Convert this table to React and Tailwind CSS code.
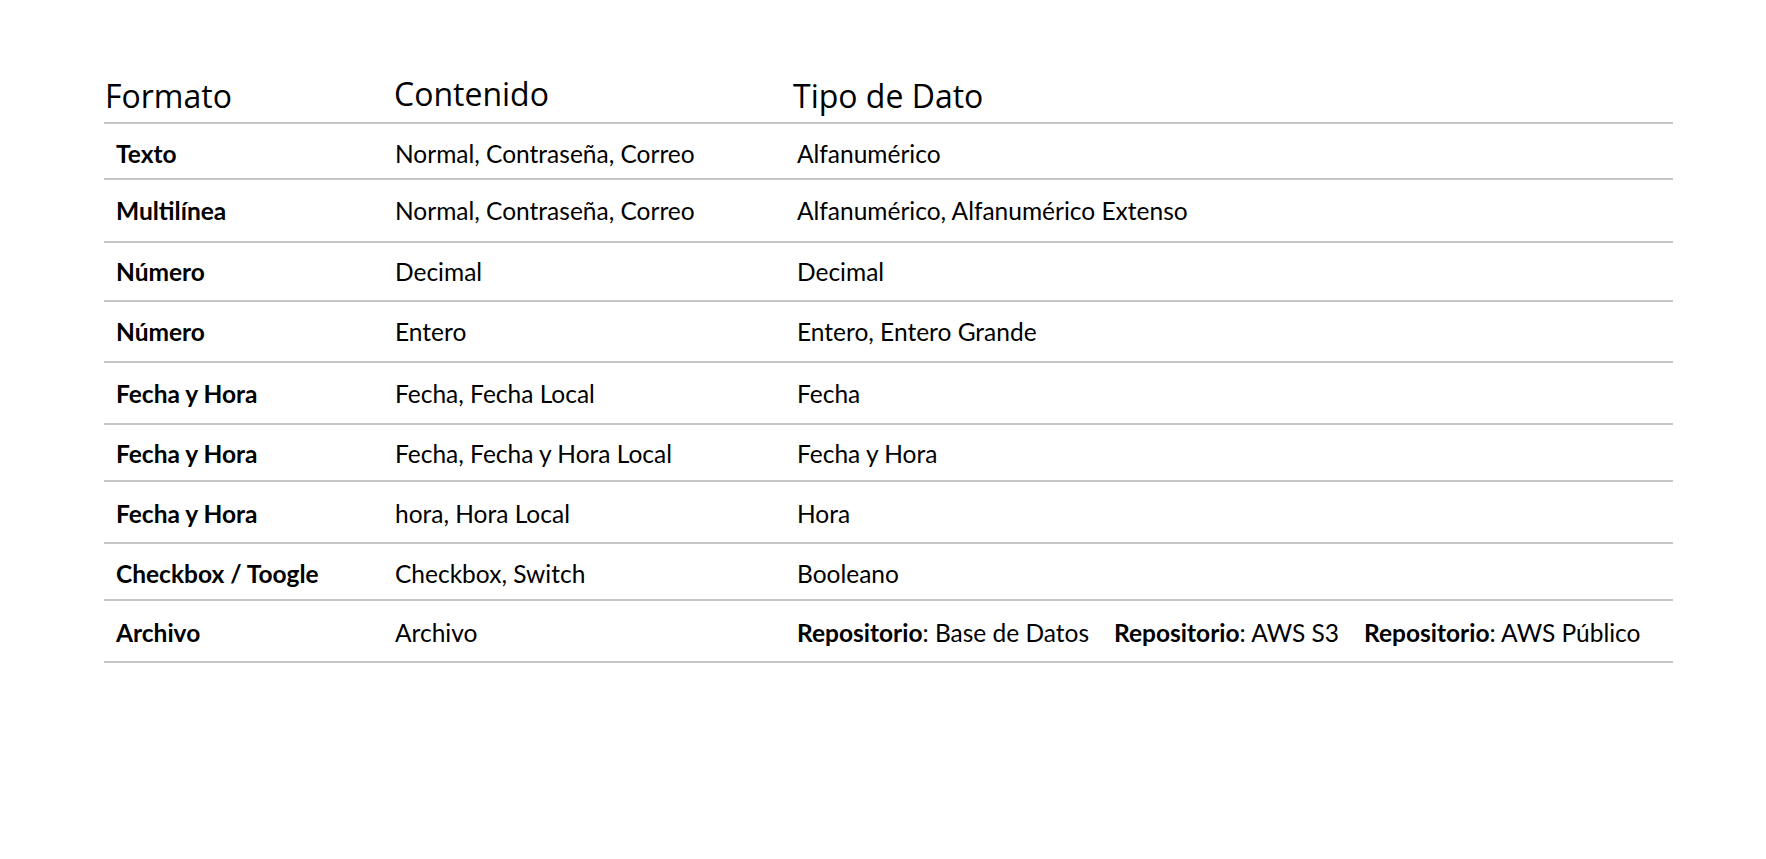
import React from "react";

const rows = [
  { h: "h-[56px] pt-[5px]", a: "Texto", b: "Normal, Contraseña, Correo", c: "Alfanumérico" },
  { h: "h-[63px] pt-[1px]", a: "Multilínea", b: "Normal, Contraseña, Correo", c: "Alfanumérico, Alfanumérico Extenso" },
  { h: "h-[59px]", a: "Número", b: "Decimal", c: "Decimal" },
  { h: "h-[61px] pt-[1px]", a: "Número", b: "Entero", c: "Entero, Entero Grande" },
  { h: "h-[62px] pt-[1px]", a: "Fecha y Hora", b: "Fecha, Fecha Local", c: "Fecha" },
  { h: "h-[57px] pt-[2px]", a: "Fecha y Hora", b: "Fecha, Fecha y Hora Local", c: "Fecha y Hora" },
  { h: "h-[62px] pt-[3px]", a: "Fecha y Hora", b: "hora, Hora Local", c: "Hora" },
  { h: "h-[57px] pt-[4px]", a: "Checkbox / Toogle", b: "Checkbox, Switch", c: "Booleano" },
  { h: "h-[62px] pt-[4px]", a: "Archivo", b: "Archivo", c: null },
];

export default function App() {
  return (
    <div className="min-h-[859px] w-[1766px] bg-white text-black">
      <div className="ml-[104px] w-[1569px] pt-[61px]">
        <div className="grid h-[63px] grid-cols-[290px_402px_1fr] items-end border-b-2 border-[#c6c6c6] font-['Open_Sans',sans-serif] text-[32px] leading-[42px]">
          <div className="pb-[5px] pl-[1px]">Formato</div>
          <div className="pb-[7px] pl-[0px]">Contenido</div>
          <div className="pb-[5px] -ml-[3px]">Tipo de Dato</div>
        </div>
        {rows.map((r, i) => (
          <div
            key={i}
            className={`grid ${r.h} grid-cols-[290px_402px_1fr] items-center border-b-2 border-[#c6c6c6] font-['Lato',sans-serif] text-[24.5px] leading-[32px]`}
          >
            <div className="pl-[12px] font-bold">{r.a}</div>
            <div className="pl-[1px]">{r.b}</div>
            <div className="pl-[1px]">
              {r.c !== null ? (
                r.c
              ) : (
                <div className="flex gap-[25px]">
                  <span>
                    <b>Repositorio</b>: Base de Datos
                  </span>
                  <span>
                    <b>Repositorio</b>: AWS S3
                  </span>
                  <span>
                    <b>Repositorio</b>: AWS Público
                  </span>
                </div>
              )}
            </div>
          </div>
        ))}
      </div>
    </div>
  );
}
